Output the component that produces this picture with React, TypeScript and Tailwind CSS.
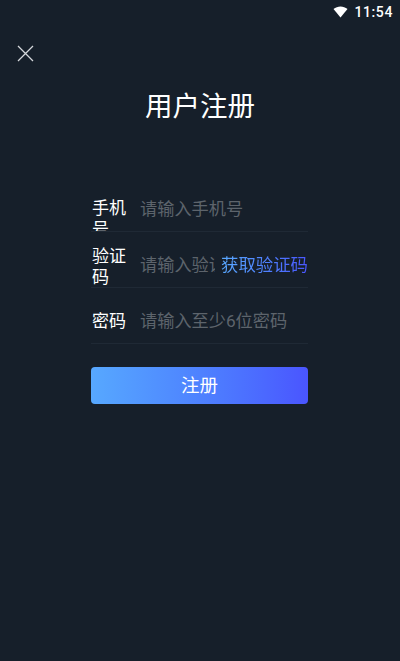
const cjk = "font-['Roboto','Noto_Sans_CJK_SC',sans-serif]";

function Field({
  label,
  placeholder,
  labelClass,
  children,
}: {
  label: string;
  placeholder: string;
  labelClass: string;
  children?: React.ReactNode;
}) {
  return (
    <div className="flex h-14 items-end border-b border-[#1f2935] pt-3">
      <div className="h-11 w-[49px] shrink-0 overflow-hidden">
        <div className={`ml-[1px] w-[36px] text-[17px] leading-[21px] text-white ${labelClass}`}>{label}</div>
      </div>
      <input
        readOnly
        placeholder={placeholder}
        className="h-11 min-w-0 flex-1 bg-transparent text-[17.2px] text-white outline-none placeholder:text-[#5d646c]"
      />
      {children}
    </div>
  );
}

export default function App() {
  return (
    <div className={`flex h-[661px] w-[400px] flex-col overflow-hidden bg-[#161f2a] ${cjk}`}>
      {/* status bar */}
      <div className="flex h-6 shrink-0 items-center justify-end gap-[6px] pr-[7px]">
        <svg width="15" height="12" viewBox="0 0 15 12">
          <path d="M0.5 3 C4.5 -0.4 10.5 -0.4 14.5 3 L7.5 11.5 Z" fill="#fff" />
        </svg>
        <span className="text-[14px] font-medium tracking-[0.6px] text-white">11:54</span>
      </div>

      <div className="pl-[17px] pt-[21px]">
        <svg width="17" height="17" viewBox="0 0 17 17" fill="none" stroke="#d5d8dc" strokeWidth="1.3">
          <path d="M1 1 L16 16 M16 1 L1 16" />
        </svg>
      </div>

      <h1 className="mt-[27px] text-center text-[27.5px] font-normal leading-[36px] text-white">用户注册</h1>

      <div className="mt-[51px] flex flex-col pl-[91px] pr-[92px]">
        <Field label="手机号" placeholder="请输入手机号" labelClass="pt-[11px]" />
        <Field label="验证码" placeholder="请输入验证码" labelClass="pt-[3px]">
          <span className="mb-[11px] ml-[6px] shrink-0 bg-gradient-to-r from-[#5aa9ff] to-[#4a55ff] bg-clip-text text-[17.4px] leading-[22px] text-transparent">
            获取验证码
          </span>
        </Field>
        <Field label="密码" placeholder="请输入至少6位密码" labelClass="pt-[12px]" />

        <button className="mt-[23px] h-[37px] rounded-[4px] bg-gradient-to-r from-[#57a8ff] to-[#4a55ff] pt-[2px] text-[18.5px] text-white">
          注册
        </button>
      </div>
    </div>
  );
}
